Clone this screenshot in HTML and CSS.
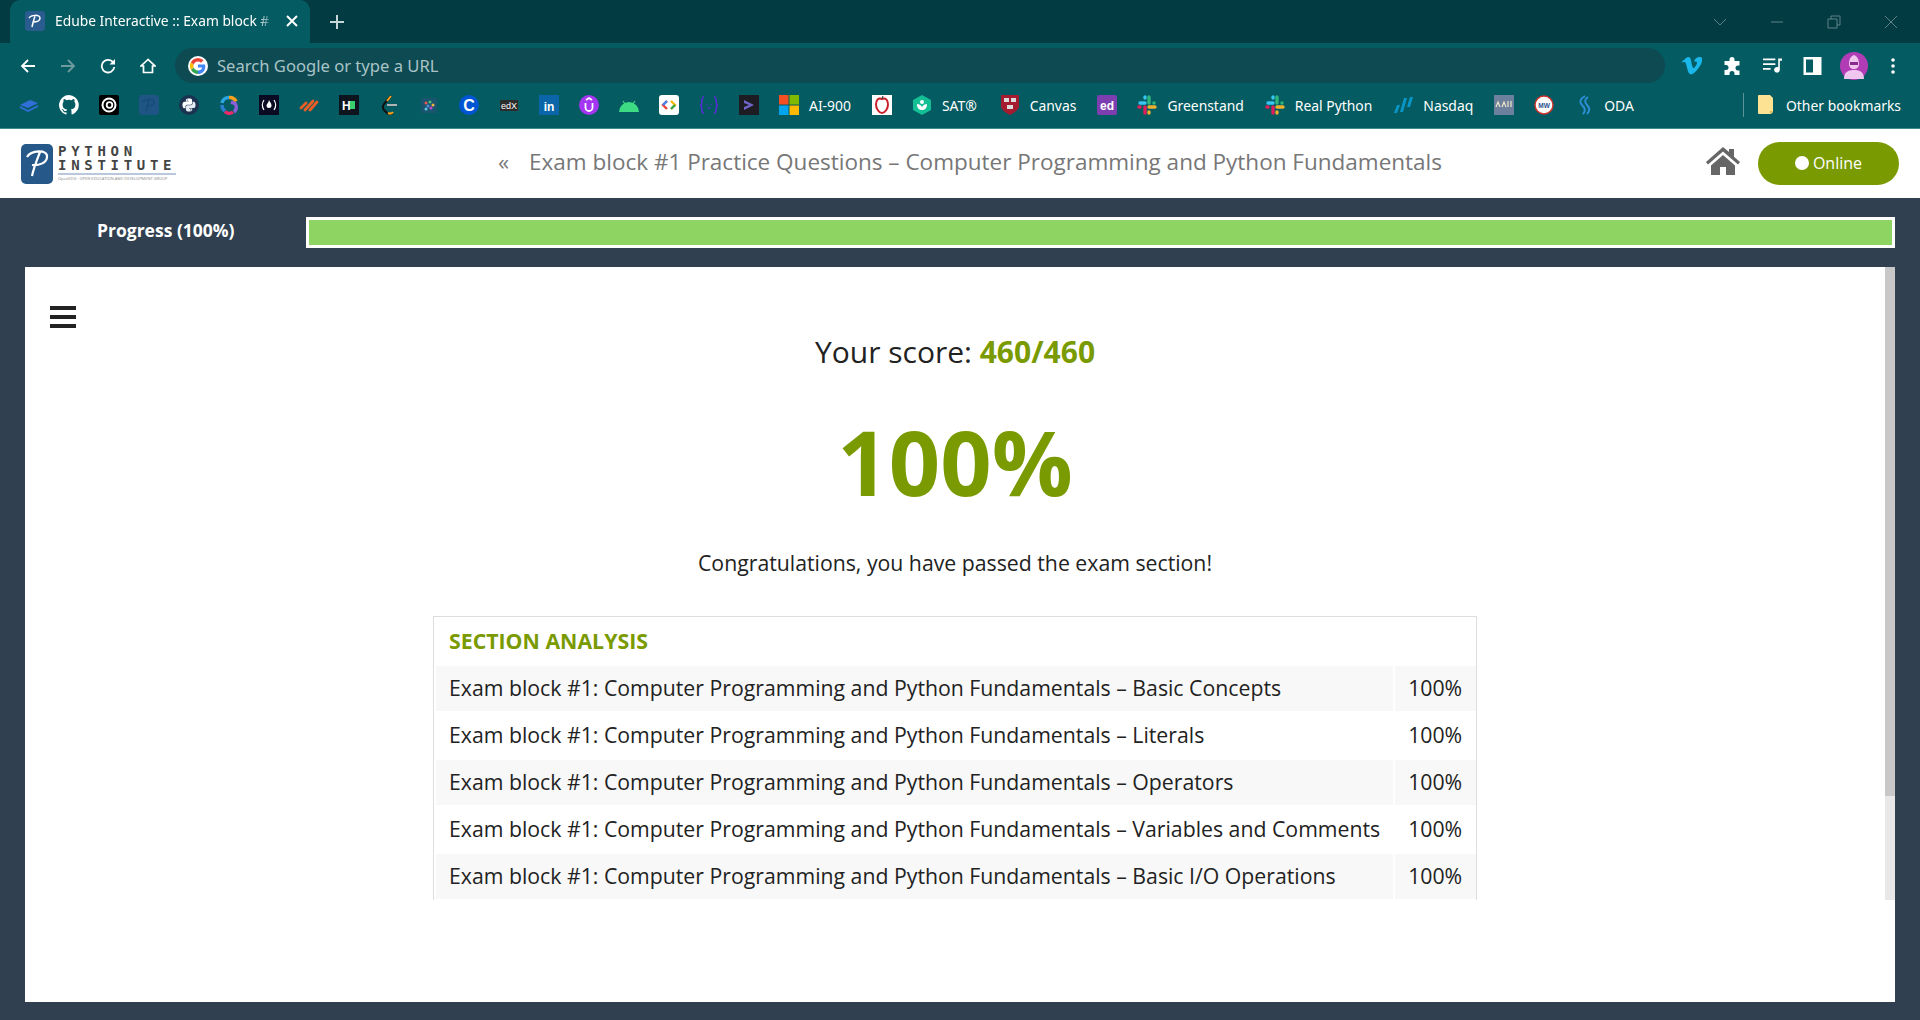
FILE: index.html
```html
<!DOCTYPE html>
<html lang="en">
<head>
    <meta charset="UTF-8">
    <title>Edube Interactive :: Exam block #1</title>
    <link rel="stylesheet" href="styles.css">
</head>
<body>
    <div class="tabstrip">
        <div class="tab">
            <svg class="favicon" viewBox="0 0 20 20"><rect width="20" height="20" rx="3" fill="#2a5c8f"/><path d="M7 16c1-5 2-8 3-11M4 7c2-3 11-4 11 0 0 3-4 4-7 4" fill="none" stroke="#fff" stroke-width="1.5"/></svg>
            <span class="tab-title">Edube Interactive :: Exam block #</span>
            <svg class="tab-close" viewBox="0 0 12 12"><path d="M1 1l10 10M11 1L1 11" stroke="#fff" stroke-width="2"/></svg>
        </div>
        <svg class="new-tab" viewBox="0 0 14 14"><path d="M7 0v14M0 7h14" stroke="#c6d6d7" stroke-width="2"/></svg>
        <div class="win-controls">
            <svg viewBox="0 0 14 14"><path d="M1 4l6 6 6-6" fill="none" stroke="#5d8388" stroke-width="1"/></svg>
            <svg viewBox="0 0 14 14"><path d="M1 7h12" stroke="#5d8388" stroke-width="1"/></svg>
            <svg viewBox="0 0 14 14"><path d="M1 4h9v9H1zM4 4V1h9v9h-3" fill="none" stroke="#5d8388" stroke-width="1"/></svg>
            <svg viewBox="0 0 14 14"><path d="M1 1l12 12M13 1L1 13" stroke="#5d8388" stroke-width="1"/></svg>
        </div>
    </div>

    <div class="toolbar">
        <svg class="nav-icon" viewBox="0 0 16 16"><path d="M15 8H2M8 2L2 8l6 6" fill="none" stroke="#fff" stroke-width="1.8"/></svg>
        <svg class="nav-icon" viewBox="0 0 16 16"><path d="M1 8h13M8 2l6 6-6 6" fill="none" stroke="#6f9b9e" stroke-width="1.8"/></svg>
        <svg class="nav-icon" viewBox="0 0 16 16"><path d="M13.5 5A6.3 6.3 0 1 0 14.3 9" fill="none" stroke="#fff" stroke-width="1.8"/><path d="M15 1v5.500H9.500z" fill="#fff"/></svg>
        <svg class="nav-icon" viewBox="0 0 16 16"><path d="M8 1.500L1 8h2.500v6.500h9V8H15z" fill="none" stroke="#fff" stroke-width="1.7"/></svg>
        <div class="omnibox">
            <svg class="g-icon" viewBox="0 0 20 20">
                <circle cx="10" cy="10" r="10" fill="#fff"/>
                <path d="M10 8.600v2.800h4.200c-.4 1.800-2 3-4.200 3V18c3.900 0 7.300-2.800 7.300-7.300 0-.7-.1-1.400-.2-2.100z" fill="#4285f4"/>
                <path d="M5.700 11.500l-2.800 2.200C4.200 16.300 6.900 18 10 18v-3.600c-2 0-3.700-1.200-4.300-2.900z" fill="#34a853"/>
                <path d="M5.700 8.500L2.900 6.300a8 8 0 0 0 0 7.400l2.800-2.200a4.600 4.600 0 0 1 0-3z" fill="#fbbc05"/>
                <path d="M10 5.600c1.200 0 2.200.4 3 1.200l2.500-2.500A8 8 0 0 0 2.900 6.300l2.800 2.200C6.300 6.800 8 5.600 10 5.600z" fill="#ea4335"/>
            </svg>
            <span class="omni-text">Search Google or type a URL</span>
        </div>
        <div class="ext-icons">
            <svg class="vimeo" viewBox="0 0 20 18"><path d="M20 4c-.1 2-1.500 4.600-4.200 8-2.700 3.600-5 5.400-6.900 5.400-1.200 0-2.200-1.100-3-3.300L4.300 8C3.700 5.800 3 4.700 2.300 4.700c-.2 0-.7.300-1.600 1L0 4.600C1 3.700 2 2.800 3 1.900 4.400.7 5.400 0 6.100 0c1.600-.1 2.600 1 3 3.400.4 2.500.7 4.100.9 4.700.5 2.100 1 3.100 1.600 3.100.4 0 1.100-.7 1.900-2 .9-1.300 1.300-2.300 1.400-3 .1-1.100-.3-1.700-1.400-1.700-.5 0-1 .1-1.500.3C13 1.300 15 0 17.900 0 20 0 21 1.300 20 4z" fill="#1ab7ea"/></svg>
            <svg class="ext" viewBox="0 0 18 18"><path d="M6 2.500a2.500 2.500 0 0 1 5 0V4h5v4.500h-1.500a2.500 2.500 0 0 0 0 5H16V18H11v-1.500a2.500 2.500 0 0 0-5 0V18H1v-5h1.500a2.500 2.500 0 0 0 0-5H1V4h5z" fill="#fff"/></svg>
            <svg class="ext" viewBox="0 0 20 18"><path d="M0 2h13M0 7h13M0 12h8" stroke="#fff" stroke-width="1.800"/><path d="M16 1h4v2.500h-2.300V13a3 3 0 1 1-1.700-2.700z" fill="#fff"/></svg>
            <svg class="ext" viewBox="0 0 18 18"><path fill-rule="evenodd" d="M0 0h18v18H0zM2.500 2.500v13h7v-13z" fill="#fff"/></svg>
            <svg class="avatar" viewBox="0 0 28 28"><circle cx="14" cy="14" r="14" fill="#b23cb5"/><path d="M14 3c3 1 5 4 5 9 0 3-2 5-5 5s-5-2-5-5c0-5 2-8 5-9zM4 27c0-7 4-9 10-9s10 2 10 9z" fill="#f0c6ee"/><rect x="10" y="10" width="8" height="3" fill="#8a2a8c"/></svg>
            <svg class="dots" viewBox="0 0 4 16"><circle cx="2" cy="2" r="1.800" fill="#fff"/><circle cx="2" cy="8" r="1.800" fill="#fff"/><circle cx="2" cy="14" r="1.800" fill="#fff"/></svg>
        </div>
    </div>

    <div class="bookmarks">
        <span class="bm"><svg viewBox="0 0 20 20"><path d="M1 10l10-5 8 3-10 5zM1 11l8 4 10-5v2l-10 5-8-4z" fill="#2f6fd6"/></svg></span>
        <span class="bm"><svg viewBox="0 0 16 16"><path d="M8 0a8 8 0 0 0-2.500 15.600c.4.100.5-.2.500-.4v-1.400c-2.200.5-2.700-1-2.700-1-.4-.9-.9-1.200-.9-1.200-.7-.5.100-.5.100-.5.800.1 1.200.8 1.200.8.700 1.200 1.900.9 2.300.7.100-.5.300-.9.500-1.100-1.800-.2-3.600-.9-3.600-4 0-.9.300-1.600.8-2.100-.1-.2-.4-1 .1-2.100 0 0 .7-.2 2.200.8a7.600 7.600 0 0 1 4 0c1.500-1 2.200-.8 2.200-.8.400 1.100.2 1.900.1 2.100.5.600.8 1.300.8 2.100 0 3.100-1.900 3.700-3.700 3.900.3.300.6.800.6 1.500v2.200c0 .2.100.5.600.4A8 8 0 0 0 8 0z" fill="#fff"/></svg></span>
        <span class="bm"><svg viewBox="0 0 20 20"><rect width="20" height="20" rx="2" fill="#000"/><circle cx="10" cy="10" r="6.500" fill="none" stroke="#fff" stroke-width="2"/><circle cx="10.500" cy="10" r="2.800" fill="none" stroke="#fff" stroke-width="1.800"/></svg></span>
        <span class="bm"><svg viewBox="0 0 20 20"><rect width="20" height="20" rx="3" fill="#1f5584"/><path d="M7 16c1-5 2-8 3-11M4 7c2-3 11-4 11 0 0 3-4 4-7 4" fill="none" stroke="#174a77" stroke-width="1.500"/></svg></span>
        <span class="bm"><svg viewBox="0 0 20 20"><circle cx="10" cy="10" r="10" fill="#1b3350"/><g transform="translate(3.500 3.500) scale(.118)"><path d="M54.900 0C26.800 0 28.600 12.200 28.600 12.200v12.600h26.800v3.800H17.900S0 26.600 0 54.900s15.600 27.300 15.600 27.300h9.300V69s-.5-15.600 15.400-15.600h26.500s14.900.2 14.900-14.400V14.800S84 0 54.900 0zM40.100 8.500a4.800 4.800 0 1 1 0 9.600 4.800 4.800 0 0 1 0-9.600z" fill="#fff" fill-rule="evenodd"/><path d="M55.700 110c28.100 0 26.300-12.200 26.300-12.200V85.200H55.200v-3.800h37.500s17.900 2 17.900-26.300-15.600-27.300-15.600-27.300h-9.300V41s.5 15.600-15.400 15.600H43.900S29 56.400 29 71v24.200S26.700 110 55.700 110zM70.500 101.500a4.800 4.800 0 1 1 0-9.600 4.800 4.800 0 0 1 0 9.600z" fill="#e6ecf2" fill-rule="evenodd"/></g></svg></span>
        <span class="bm"><svg viewBox="0 0 20 20"><path d="M10 2.500a7 7 0 0 1 7 4" fill="none" stroke="#f7a11a" stroke-width="3.500"/><path d="M3 8a7 7 0 0 1 7-5.500" fill="none" stroke="#2aa5e0" stroke-width="3.500"/><path d="M3 10a7 7 0 0 0 3 6" fill="none" stroke="#2a7fd0" stroke-width="3.500"/><path d="M6 16.500a6 6 0 0 0 8 .5" fill="none" stroke="#ef2a6b" stroke-width="3.500"/><path d="M15 17a6 6 0 0 0 1-8.500L12 7" fill="none" stroke="#8b5fd6" stroke-width="3.500"/></svg></span>
        <span class="bm"><svg viewBox="0 0 20 20"><rect width="20" height="20" fill="#0a0a23"/><path d="M5 5c-2 3-2 7 0 10M15 5c2 3 2 7 0 10" fill="none" stroke="#fff" stroke-width="1.200"/><path d="M10 5c.5 2 2.500 3 2.500 5.500a2.500 2.500 0 0 1-5 0C7.500 9 9.500 8 10 5z" fill="#fff"/></svg></span>
        <span class="bm"><svg viewBox="0 0 20 20"><path d="M2 13l5-5M6 15l8-9M11 15l7-8" stroke="#ea5f25" stroke-width="2.800" stroke-linecap="round"/></svg></span>
        <span class="bm"><svg viewBox="0 0 20 20"><rect width="20" height="20" fill="#0e141e"/><text x="3" y="14.500" class="bm-glyph" fill="#fff">H</text><rect x="11" y="6" width="5" height="8" fill="#39d06f"/></svg></span>
        <span class="bm"><svg viewBox="0 0 20 20"><path d="M12 1L5 9c-1.500 2-1.500 4 0 6l3 3c2 1.500 4 1.500 6 0" fill="none" stroke="#111" stroke-width="2"/><path d="M8 10h10" stroke="#b3b3b3" stroke-width="2"/><path d="M12 1l-4 5M9 18c2 1 4 .5 5-1" fill="none" stroke="#f89f1b" stroke-width="2"/></svg></span>
        <span class="bm"><svg viewBox="0 0 20 20"><rect x="2" y="3" width="16" height="15" fill="#1a5570"/><circle cx="7" cy="8" r="1.500" fill="#e8584c"/><circle cx="11" cy="7" r="1.500" fill="#4fbf73"/><circle cx="14" cy="10" r="1.500" fill="#f2b33d"/><circle cx="9" cy="11" r="1.500" fill="#4a90d9"/><circle cx="12" cy="13" r="1.500" fill="#c34ad0"/><circle cx="7" cy="14" r="1.500" fill="#5fc6e0"/></svg></span>
        <span class="bm"><svg viewBox="0 0 20 20"><circle cx="10" cy="10" r="10" fill="#0056d2"/><text x="10" y="15.500" text-anchor="middle" class="bm-glyph big" fill="#fff">C</text></svg></span>
        <span class="bm"><svg viewBox="0 0 20 20"><rect x="1" y="5" width="18" height="11" fill="#2c2c2c"/><text x="10" y="14" text-anchor="middle" class="bm-glyph small" fill="#fff">edX</text></svg></span>
        <span class="bm"><svg viewBox="0 0 20 20"><rect width="20" height="20" fill="#0a66a8"/><text x="10" y="15.500" text-anchor="middle" class="bm-glyph" fill="#fff">in</text></svg></span>
        <span class="bm"><svg viewBox="0 0 20 20"><circle cx="10" cy="10" r="10" fill="#a435f0"/><path d="M6.500 8v4.500a3.500 3.500 0 0 0 7 0V8M7 5l3-2 3 2" fill="none" stroke="#fff" stroke-width="1.800"/></svg></span>
        <span class="bm"><svg viewBox="0 0 20 20"><path d="M0 16a10 10 0 0 1 20 0z" fill="#3ddc84" transform="translate(0 1)"/><path d="M4 6l2 3M16 6l-2 3" stroke="#3ddc84" stroke-width="1.200"/></svg></span>
        <span class="bm"><svg viewBox="0 0 20 20"><rect width="20" height="20" rx="3" fill="#fff"/><path d="M8 6l-4 4 4 4" fill="none" stroke="#ea4335" stroke-width="2.400"/><path d="M12 6l4 4-4 4" fill="none" stroke="#fbbc05" stroke-width="2.400"/><path d="M8 6l-4 4" stroke="#4285f4" stroke-width="2.400"/><path d="M16 10l-4 4" stroke="#34a853" stroke-width="2.400"/></svg></span>
        <span class="bm"><svg viewBox="0 0 20 20"><path d="M5 2C2 2 3 7 2.500 9 2 10 1 10 1 10s1 0 1.500 1C3 13 2 18 5 18M15 2c3 0 2 5 2.500 7 .5 1 1.500 1 1.500 1s-1 0-1.500 1c-.5 2 .5 7-2.500 7" fill="none" stroke="#5a2bd8" stroke-width="1.500"/><path d="M8 9v1M12 9v1M8 12.500c1 1 3 1 4 0" fill="none" stroke="#5a2bd8"/></svg></span>
        <span class="bm"><svg viewBox="0 0 20 20"><rect width="20" height="20" fill="#1d1c22"/><path d="M5 5l10 5-10 5V12l5-2-5-2z" fill="#6f63c9"/></svg></span>
        <span class="bm labeled"><svg viewBox="0 0 20 20"><rect width="9.500" height="9.500" fill="#f25022"/><rect x="10.500" width="9.500" height="9.500" fill="#7fba00"/><rect y="10.500" width="9.500" height="9.500" fill="#00a4ef"/><rect x="10.500" y="10.500" width="9.500" height="9.500" fill="#ffb900"/></svg>AI-900</span>
        <span class="bm"><svg viewBox="0 0 20 20"><rect width="20" height="20" fill="#fff"/><path d="M10 4C6 2.500 4 5.500 4 9.500S7 18 10 18s6-4.500 6-8.500S14 2.500 10 4z" fill="none" stroke="#c8202a" stroke-width="2"/><path d="M10 4l1-3" stroke="#444" stroke-width="1.200"/></svg></span>
        <span class="bm labeled sat"><svg viewBox="0 0 20 20"><path d="M10 0l9 5v10l-9 5-9-5V5z" fill="#14bf96"/><circle cx="10" cy="7" r="2" fill="#fff"/><path d="M5 9c0 4 2 6 5 6s5-2 5-6c-2 0-4 1-5 3-1-2-3-3-5-3z" fill="#fff"/></svg>SAT®</span>
        <span class="bm labeled"><svg viewBox="0 0 20 20"><path d="M1 0h18v11c0 4-5 7-9 9-4-2-9-5-9-9z" fill="#a51c30"/><rect x="4" y="3" width="5" height="4" fill="#ddd"/><rect x="11" y="3" width="5" height="4" fill="#ddd"/><rect x="7" y="10" width="6" height="4" fill="#ddd"/></svg>Canvas</span>
        <span class="bm"><svg viewBox="0 0 20 20"><rect width="20" height="20" rx="2" fill="#7d3fb0"/><text x="10" y="14.500" text-anchor="middle" class="bm-glyph" fill="#fff">ed</text></svg></span>
        <span class="bm labeled"><svg viewBox="0 0 20 20"><g stroke-width="3.400" stroke-linecap="round" fill="none"><path d="M3 8h5" stroke="#36c5f0"/><path d="M8 2v1" stroke="#36c5f0"/><path d="M12 2v6" stroke="#2eb67d"/><path d="M17 8h0" stroke="#2eb67d"/><path d="M12 12h6" stroke="#ecb22e"/><path d="M12 17v1" stroke="#ecb22e"/><path d="M8 12v6" stroke="#e01e5a"/><path d="M2 12h1" stroke="#e01e5a"/></g></svg>Greenstand</span>
        <span class="bm labeled"><svg viewBox="0 0 20 20"><g stroke-width="3.400" stroke-linecap="round" fill="none"><path d="M3 8h5" stroke="#36c5f0"/><path d="M8 2v1" stroke="#36c5f0"/><path d="M12 2v6" stroke="#2eb67d"/><path d="M17 8h0" stroke="#2eb67d"/><path d="M12 12h6" stroke="#ecb22e"/><path d="M12 17v1" stroke="#ecb22e"/><path d="M8 12v6" stroke="#e01e5a"/><path d="M2 12h1" stroke="#e01e5a"/></g></svg>Real Python</span>
        <span class="bm labeled"><svg viewBox="0 0 20 20"><path d="M1 18l3-8h3l-3 8zM7 17l4-14h3l-4 14zM14 12l3-10h3l-3 10z" fill="#0996c7"/></svg>Nasdaq</span>
        <span class="bm"><svg viewBox="0 0 20 20"><rect width="20" height="20" fill="#6d819c"/><path d="M2 12l2-5 2 5M8 12l2-5 2 5M14 12V6M17 12V6" fill="none" stroke="#efe8c8" stroke-width="1.200"/></svg></span>
        <span class="bm"><svg viewBox="0 0 20 20"><circle cx="10" cy="10" r="9" fill="#fff" stroke="#d0312d" stroke-width="1.400"/><text x="10" y="12.500" text-anchor="middle" class="bm-glyph tiny" fill="#2a4f8f">MW</text></svg></span>
        <span class="bm"><svg viewBox="0 0 16 20"><path d="M9 1C4 4 3 7 6 10s4 6 1 9M12 2c-3 2-4 5-1 8s3 6 0 9" fill="none" stroke="#2d8fd5" stroke-width="2"/></svg>ODA</span>
        <div class="other-bm">
            <svg viewBox="0 0 16 20"><path d="M0 1a1 1 0 0 1 1-1h11l3 3v14l-2 2H1a1 1 0 0 1-1-1z" fill="#fde293"/><path d="M12 19l3-3h-3z" fill="#e3b341"/></svg>Other bookmarks
        </div>
    </div>

    <header class="site-header">
        <div class="logo">
            <svg class="logo-mark" viewBox="0 0 32 40"><rect width="32" height="40" rx="5" fill="#26598a"/><path d="M11 32c2-9 5-16 8-24M6 13c4-7 21-8 20 0 0 6-9 9-15 8" fill="none" stroke="#fff" stroke-width="2.200"/></svg>
            <div class="logo-text">
                <div class="logo-line">PYTHON</div>
                <div class="logo-line">INSTITUTE</div>
                <div class="logo-sub">OpenEDG · OPEN EDUCATION AND DEVELOPMENT GROUP</div>
            </div>
        </div>
        <div class="course-title"><span class="back-mark">«</span>Exam block #1 Practice Questions – Computer Programming and Python Fundamentals</div>
        <svg class="home-link" viewBox="0 0 34 28"><path d="M17 0L0 15l2 2.500L17 4.500l15 13 2-2.500-6-5.300V2h-5v3zM5 18.500V28h9v-8h6v8h9v-9.500L17 8z" fill="#666"/></svg>
        <div class="status-pill"><span class="status-dot"></span>Online</div>
    </header>

    <main class="page">
        <div class="progress-row">
            <div class="progress-label">Progress (100%)</div>
            <div class="progress-bar"><div class="progress-fill" style="width: 100%"></div></div>
        </div>
        <div class="content">
            <div class="content-main">
                <div class="result-pane">
                    <svg class="menu-toggle" viewBox="0 0 26 22"><path d="M0 0h26v4H0zM0 9h26v4H0zM0 18h26v4H0z" fill="#222"/></svg>
                    <p class="score-line">Your score: <strong>460/460</strong></p>
                    <p class="percent">100%</p>
                    <p class="congrats">Congratulations, you have passed the exam section!</p>
                    <div class="analysis">
                        <table class="analysis-table">
                            <tr><th colspan="2">SECTION ANALYSIS</th></tr>
                            <tr class="odd"><td>Exam block #1: Computer Programming and Python Fundamentals – Basic Concepts</td><td class="pct">100%</td></tr>
                            <tr><td>Exam block #1: Computer Programming and Python Fundamentals – Literals</td><td class="pct">100%</td></tr>
                            <tr class="odd"><td>Exam block #1: Computer Programming and Python Fundamentals – Operators</td><td class="pct">100%</td></tr>
                            <tr><td>Exam block #1: Computer Programming and Python Fundamentals – Variables and Comments</td><td class="pct">100%</td></tr>
                            <tr class="odd"><td>Exam block #1: Computer Programming and Python Fundamentals – Basic I/O Operations</td><td class="pct">100%</td></tr>
                        </table>
                    </div>
                </div>
                <div class="scroll-track"><div class="scroll-thumb"></div></div>
            </div>
        </div>
    </main>
</body>
</html>
```

FILE: styles.css
```css
* {
    box-sizing: border-box;
}
html, body {
    height: 100%;
    margin: 0;
}
body {
    display: flex;
    flex-direction: column;
    overflow: hidden;
    font-family: "Open Sans", "Noto Sans", sans-serif;
    background-color: #304050;
}

/* browser chrome */
.tabstrip {
    display: flex;
    align-items: flex-end;
    height: 43px;
    padding-left: 10px;
    background-color: #023b42;
}
.tab {
    display: flex;
    align-items: center;
    width: 300px;
    height: 43px;
    padding: 0 12px 2px 15px;
    background-color: #045b61;
    border-radius: 10px 10px 0 0;
}
.favicon {
    flex: none;
    width: 20px;
    height: 20px;
}
.tab-title {
    flex: 1;
    margin-left: 10px;
    white-space: nowrap;
    font-family: "Noto Sans", sans-serif;
    font-size: 13.800px;
    color: #fff;
    -webkit-mask-image: linear-gradient(to right, #000 92%, rgba(0, 0, 0, 0.3) 98%);
    mask-image: linear-gradient(to right, #000 92%, rgba(0, 0, 0, 0.3) 98%);
}
.tab-close {
    flex: none;
    width: 12px;
    height: 12px;
    margin-left: 12px;
}
.new-tab {
    width: 14px;
    height: 14px;
    margin: 0 0 14px 20px;
}
.win-controls {
    display: flex;
    gap: 43px;
    margin: 0 22px 14px auto;
}
.win-controls svg {
    width: 14px;
    height: 14px;
}
.toolbar {
    display: flex;
    align-items: center;
    height: 40px;
    padding: 5px 0 0 20px;
    background-color: #045b61;
}
.nav-icon {
    flex: none;
    width: 16px;
    height: 16px;
    margin-right: 24px;
}
.omnibox {
    display: flex;
    align-items: center;
    width: 1490px;
    height: 35px;
    margin-left: -5px;
    padding-left: 13px;
    background-color: #0e4a52;
    border-radius: 18px;
}
.g-icon {
    width: 20px;
    height: 20px;
}
.omni-text {
    margin-left: 9px;
    font-family: "Noto Sans", sans-serif;
    font-size: 16.600px;
    color: #a8c3c6;
}
.ext-icons {
    display: flex;
    align-items: center;
    margin-left: 17px;
}
.vimeo {
    width: 20px;
    height: 18px;
}
.ext {
    width: 19px;
    height: 18px;
    margin-left: 21px;
}
.avatar {
    width: 28px;
    height: 28px;
    margin-left: 18px;
}
.dots {
    width: 4px;
    height: 16px;
    margin-left: 23px;
}
.bookmarks {
    display: flex;
    align-items: center;
    gap: 20px;
    height: 46px;
    padding: 0 0 1px 19px;
    font-family: "Noto Sans", sans-serif;
    font-size: 13.900px;
    color: #fff;
    background-color: #045b61;
    border-bottom: 1px solid #3f8b8f;
}
.bm {
    display: flex;
    align-items: center;
    gap: 10px;
    white-space: nowrap;
}
.bm.labeled {
    padding-right: 1px;
}
.bm.sat {
    padding-right: 3px;
}
.bm svg {
    flex: none;
    width: 20px;
    height: 20px;
}
.bm-glyph {
    font-family: "Liberation Sans", sans-serif;
    font-size: 12px;
    font-weight: bold;
}
.bm-glyph.big {
    font-size: 16px;
}
.bm-glyph.small {
    font-size: 9px;
    font-weight: normal;
}
.bm-glyph.tiny {
    font-size: 6.500px;
}
.other-bm {
    display: flex;
    align-items: center;
    gap: 12px;
    height: 24px;
    margin-left: auto;
    padding: 0 19px 0 14px;
    white-space: nowrap;
    border-left: 1px solid #5d9296;
}
.other-bm svg {
    width: 16px;
    height: 20px;
}

/* site header */
.site-header {
    display: flex;
    align-items: center;
    height: 69px;
    padding-left: 21px;
    background-color: #fff;
}
.logo {
    display: flex;
    gap: 5px;
    width: 476px;
}
.logo-mark {
    flex: none;
    width: 32px;
    height: 40px;
}
.logo-text {
    width: 120px;
    color: #444;
}
.logo-line {
    font-family: "DejaVu Sans Mono", monospace;
    font-size: 14px;
    font-weight: bold;
    line-height: 14px;
    letter-spacing: 4.700px;
    white-space: nowrap;
}
.logo-sub {
    width: 118px;
    margin-top: 1px;
    padding-top: 1px;
    overflow: hidden;
    font-size: 4px;
    line-height: 6px;
    white-space: nowrap;
    color: #888;
    border-top: 2px solid #b9c8dc;
}
.course-title {
    display: flex;
    align-items: center;
    width: 1209px;
    margin-bottom: 5px;
    font-size: 22.500px;
    color: #777;
    white-space: nowrap;
}
.back-mark {
    width: 32px;
    padding-left: 1px;
}
.home-link {
    flex: none;
    width: 34px;
    height: 28px;
    margin-bottom: 6px;
}
.status-pill {
    display: flex;
    align-items: center;
    justify-content: center;
    gap: 4px;
    width: 141px;
    height: 43px;
    margin-left: 18px;
    padding-bottom: 1px;
    font-size: 16px;
    color: #fff;
    background-color: #7a9a01;
    border-radius: 22px;
}
.status-dot {
    width: 14px;
    height: 14px;
    background-color: #fff;
    border-radius: 50%;
}

/* page */
.page {
    flex: 1;
    min-height: 0;
    padding: 0 25px 18px;
    background-color: #304050;
}
.progress-row {
    display: flex;
    align-items: center;
    height: 69px;
}
.progress-label {
    width: 281px;
    margin-bottom: 5px;
    padding-left: 72px;
    font-size: 17.500px;
    font-weight: 700;
    color: #fff;
}
.progress-bar {
    flex: 1;
    height: 31px;
    padding: 3px;
    background-color: #fff;
}
.progress-fill {
    height: 100%;
    background-color: #8ed462;
}
.content {
    height: 735px;
    background-color: #fff;
}
.content-main {
    display: flex;
    height: 633px;
}
.result-pane {
    position: relative;
    flex: 1;
    overflow: hidden;
    text-align: center;
    color: #222;
}
.scroll-track {
    flex: none;
    width: 10px;
    background-color: #e8e8e8;
}
.scroll-thumb {
    height: 529px;
    background-color: #c8c8c8;
}
.menu-toggle {
    position: absolute;
    top: 39px;
    left: 25px;
    width: 26px;
    height: 22px;
}
.score-line {
    margin: 0;
    padding-top: 64px;
    font-size: 30px;
    line-height: 42px;
}
.score-line strong {
    color: #7a9a01;
}
.percent {
    margin: 28px 0 0;
    font-size: 90px;
    font-weight: 700;
    line-height: 120px;
    color: #7a9a01;
}
.congrats {
    margin: 27px 0 0;
    font-size: 21.250px;
    line-height: 30px;
}
.analysis {
    width: 1044px;
    margin: 38px auto 0;
    border: 1px solid #ddd;
    border-bottom: 0;
}
.analysis-table {
    width: 100%;
    border-spacing: 2px;
    text-align: left;
    font-size: 21.250px;
}
.analysis-table th {
    height: 45px;
    padding: 0 13px 2px;
    font-size: 21.300px;
    font-weight: 700;
    color: #7a9a01;
}
.analysis-table td {
    height: 45px;
    padding: 0 13px 2px;
    white-space: nowrap;
}
.analysis-table .odd td {
    background-color: #f8f8f8;
}
.analysis-table .pct {
    width: 79px;
    padding-right: 14px;
    text-align: center;
}
```
